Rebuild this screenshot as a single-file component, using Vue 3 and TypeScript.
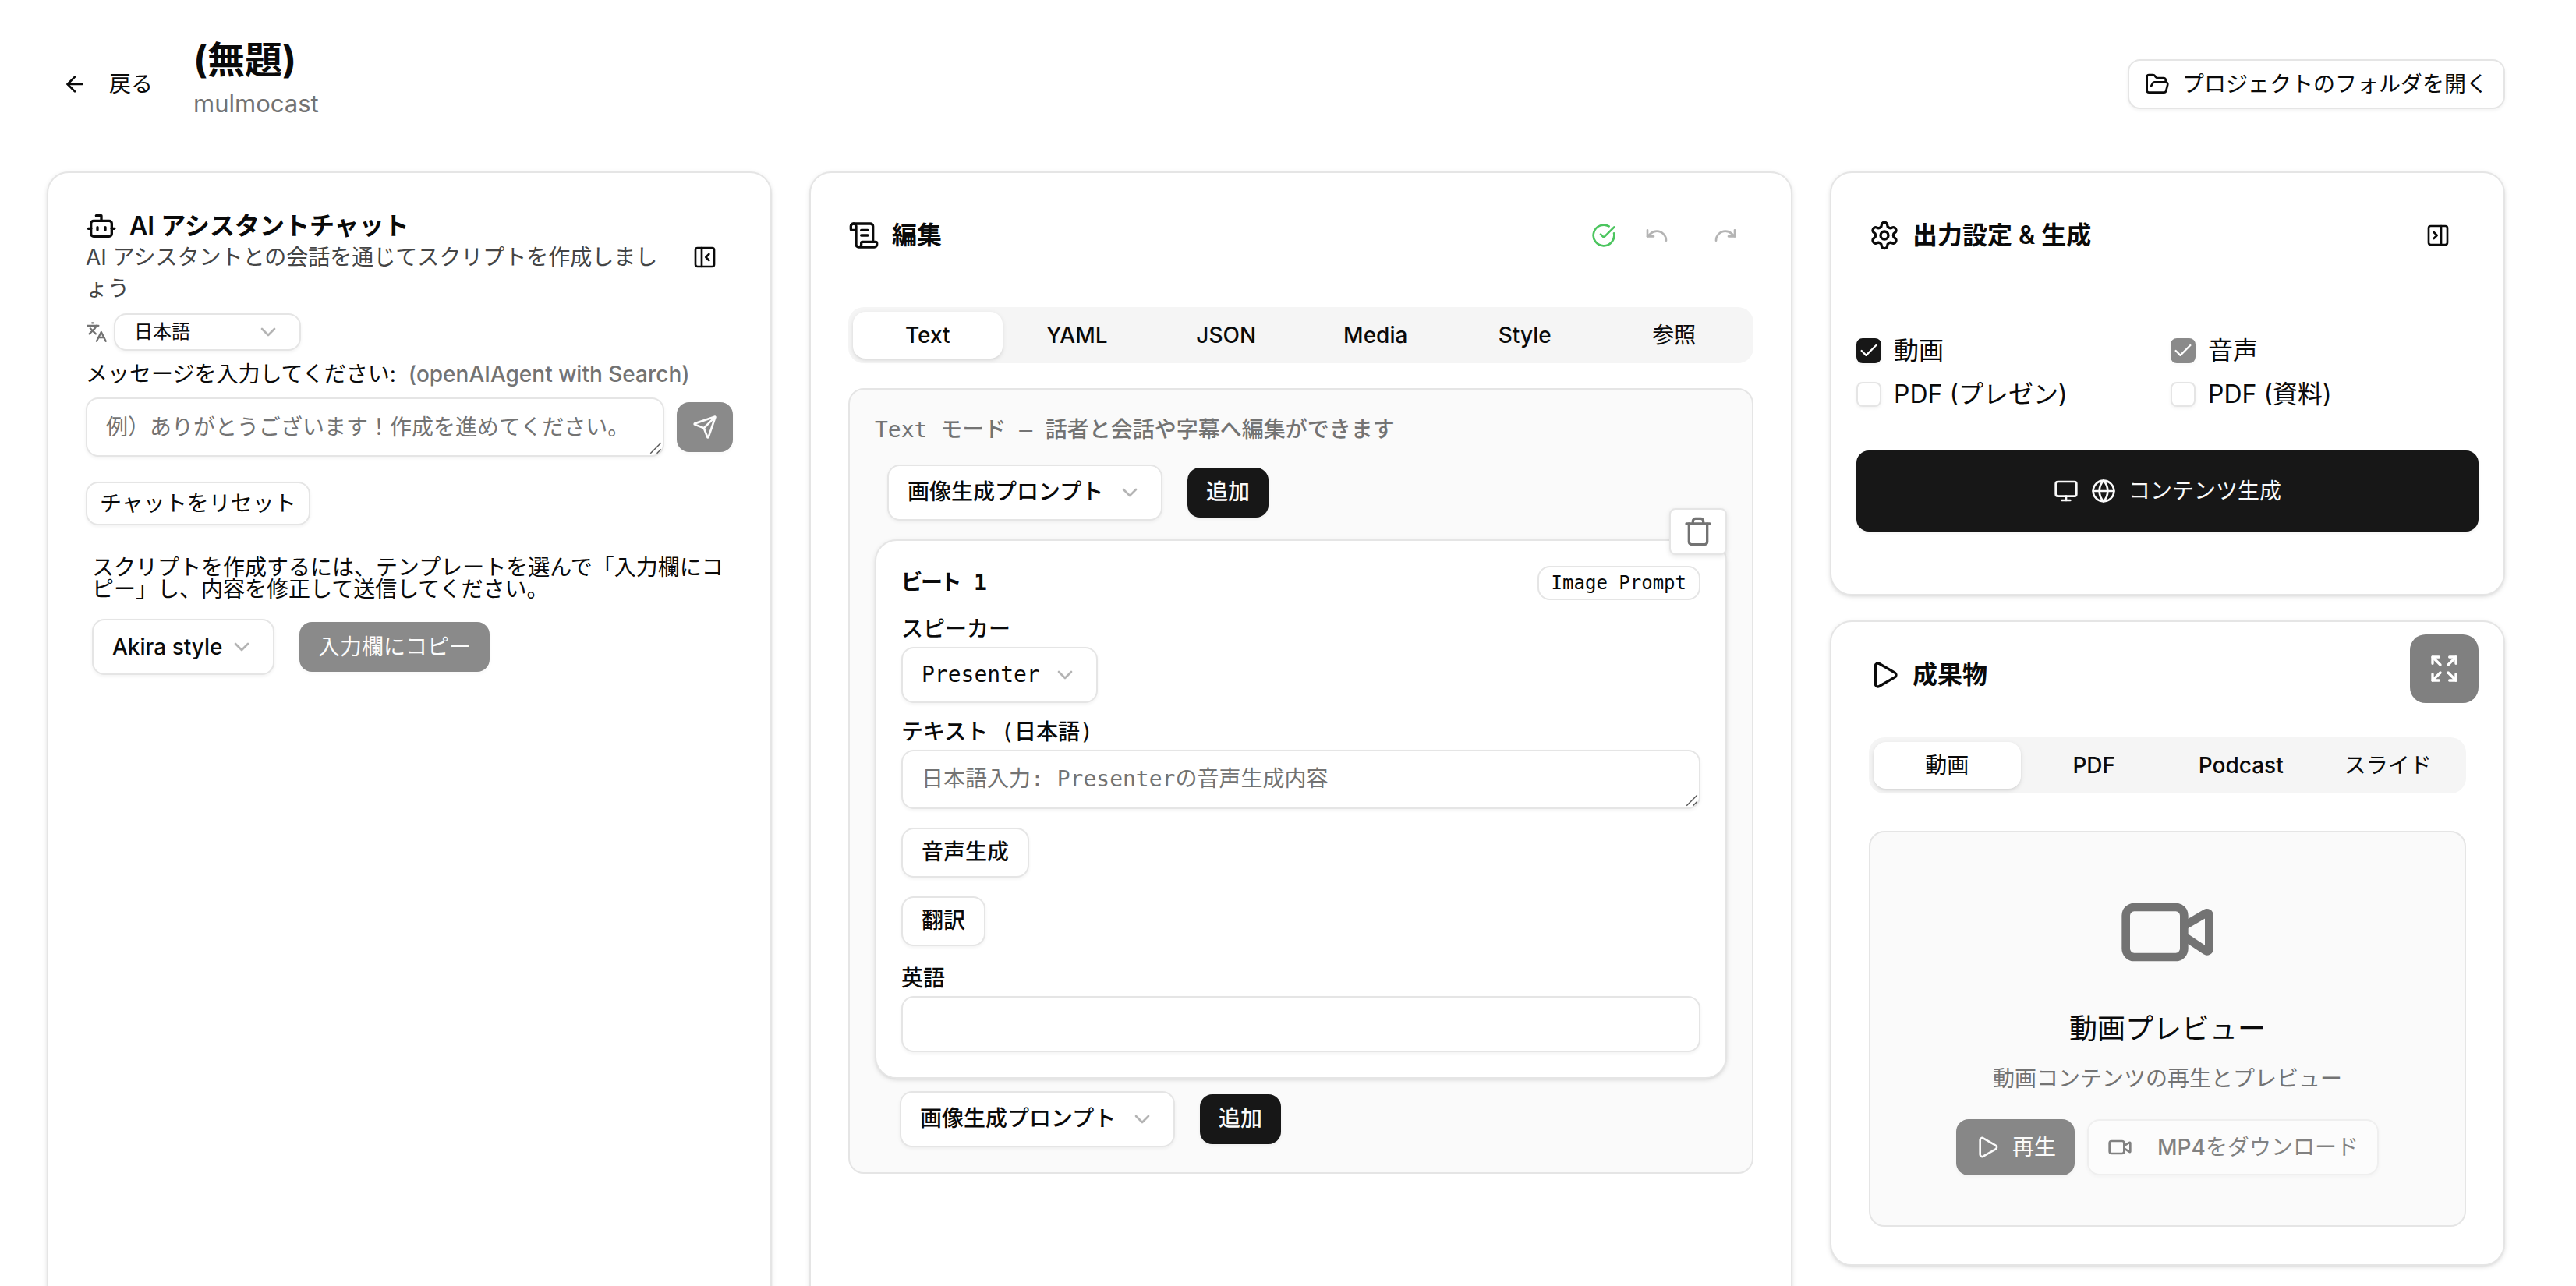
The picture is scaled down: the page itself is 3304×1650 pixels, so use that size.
<script setup lang="ts">
import { ref } from 'vue'

const icons = {
  arrowLeft: '<path d="m12 19-7-7 7-7"/><path d="M19 12H5"/>',
  folderOpen:
    '<path d="m6 14 1.5-2.9A2 2 0 0 1 9.24 10H20a2 2 0 0 1 1.94 2.5l-1.54 6a2 2 0 0 1-1.95 1.5H4a2 2 0 0 1-2-2V5a2 2 0 0 1 2-2h3.9a2 2 0 0 1 1.69.9l.81 1.2a2 2 0 0 0 1.67.9H18a2 2 0 0 1 2 2v2"/>',
  bot: '<path d="M12 8V4H8"/><rect width="16" height="12" x="4" y="8" rx="2"/><path d="M2 14h2"/><path d="M20 14h2"/><path d="M15 13v2"/><path d="M9 13v2"/>',
  panelLeftClose:
    '<rect width="18" height="18" x="3" y="3" rx="2"/><path d="M9 3v18"/><path d="m16 15-3-3 3-3"/>',
  panelRightClose:
    '<rect width="18" height="18" x="3" y="3" rx="2"/><path d="M15 3v18"/><path d="m8 9 3 3-3 3"/>',
  languages:
    '<path d="m5 8 6 6"/><path d="m4 14 6-6 2-3"/><path d="M2 5h12"/><path d="M7 2h1"/><path d="m22 22-5-10-5 10"/><path d="M14 18h6"/>',
  chevronDown: '<path d="m6 9 6 6 6-6"/>',
  send: '<path d="M14.536 21.686a.5.5 0 0 0 .937-.024l6.5-19a.496.496 0 0 0-.635-.635l-19 6.5a.5.5 0 0 0-.024.937l7.93 3.18a2 2 0 0 1 1.112 1.11z"/><path d="m21.854 2.147-10.94 10.939"/>',
  scroll:
    '<path d="M15 12h-5"/><path d="M15 8h-5"/><path d="M19 17V5a2 2 0 0 0-2-2H4"/><path d="M8 21h12a2 2 0 0 0 2-2v-1a1 1 0 0 0-1-1H11a1 1 0 0 0-1 1v1a2 2 0 1 1-4 0V5a2 2 0 1 0-4 0v2a1 1 0 0 0 1 1h3"/>',
  circleCheck: '<path d="M21.801 10A10 10 0 1 1 17 3.335"/><path d="m9 11 3 3L22 4"/>',
  undo: '<path d="M3 7v6h6"/><path d="M21 17a9 9 0 0 0-9-9 9 9 0 0 0-6 2.3L3 13"/>',
  redo: '<path d="M21 7v6h-6"/><path d="M3 17a9 9 0 0 1 9-9 9 9 0 0 1 6 2.3l3 2.7"/>',
  trash:
    '<path d="M19 6v14a2 2 0 0 1-2 2H7a2 2 0 0 1-2-2V6"/><path d="M3 6h18"/><path d="M8 6V4a2 2 0 0 1 2-2h4a2 2 0 0 1 2 2v2"/>',
  settings:
    '<path d="M12.22 2h-.44a2 2 0 0 0-2 2v.18a2 2 0 0 1-1 1.73l-.43.25a2 2 0 0 1-2 0l-.15-.08a2 2 0 0 0-2.73.73l-.22.38a2 2 0 0 0 .73 2.73l.15.1a2 2 0 0 1 1 1.72v.51a2 2 0 0 1-1 1.74l-.15.09a2 2 0 0 0-.73 2.73l.22.38a2 2 0 0 0 2.73.73l.15-.08a2 2 0 0 1 2 0l.43.25a2 2 0 0 1 1 1.73V20a2 2 0 0 0 2 2h.44a2 2 0 0 0 2-2v-.18a2 2 0 0 1 1-1.73l.43-.25a2 2 0 0 1 2 0l.15.08a2 2 0 0 0 2.73-.73l.22-.39a2 2 0 0 0-.73-2.73l-.15-.08a2 2 0 0 1-1-1.74v-.5a2 2 0 0 1 1-1.74l.15-.09a2 2 0 0 0 .73-2.73l-.22-.38a2 2 0 0 0-2.73-.73l-.15.08a2 2 0 0 1-2 0l-.43-.25a2 2 0 0 1-1-1.73V4a2 2 0 0 0-2-2z"/><circle cx="12" cy="12" r="3"/>',
  check: '<path d="M20 6 9 17l-5-5"/>',
  monitor:
    '<rect width="20" height="14" x="2" y="3" rx="2"/><path d="M8 21h8"/><path d="M12 17v4"/>',
  globe:
    '<circle cx="12" cy="12" r="10"/><path d="M12 2a14.5 14.5 0 0 0 0 20 14.5 14.5 0 0 0 0-20"/><path d="M2 12h20"/>',
  play: '<path d="M5 5a2 2 0 0 1 3.008-1.728l11.997 6.998a2 2 0 0 1 .003 3.458l-12 7A2 2 0 0 1 5 19z"/>',
  expand:
    '<path d="m15 15 6 6"/><path d="m15 9 6-6"/><path d="M21 16v5h-5"/><path d="M21 8V3h-5"/><path d="M3 16v5h5"/><path d="m3 21 6-6"/><path d="M3 8V3h5"/><path d="M9 9 3 3"/>',
  video:
    '<path d="m16 13 5.223 3.482a.5.5 0 0 0 .777-.416V7.87a.5.5 0 0 0-.752-.432L16 10.5"/><rect x="2" y="6" width="14" height="12" rx="2"/>',
  grip: '<path d="M3 21 21 3"/><path d="m14 21 7-7"/>',
}

interface OutputOption {
  id: string
  label: string
  checked: boolean
  disabled: boolean
}

const editTabs = ['Text', 'YAML', 'JSON', 'Media', 'Style', '参照']
const activeEditTab = ref('Text')

const resultTabs = ['動画', 'PDF', 'Podcast', 'スライド']
const activeResultTab = ref('動画')

// Latin tab names are set in medium weight, Japanese ones in regular.
const isLatin = (name: string) => /^[A-Za-z]+$/.test(name)

const outputs = ref<OutputOption[]>([
  { id: 'movie', label: '動画', checked: true, disabled: false },
  { id: 'audio', label: '音声', checked: true, disabled: true },
  { id: 'pdf-slide', label: 'PDF (プレゼン)', checked: false, disabled: false },
  { id: 'pdf-handout', label: 'PDF (資料)', checked: false, disabled: false },
])

const message = ref('')
const beatText = ref('')
const englishText = ref('')
</script>

<template>
  <div class="page">
    <header class="topbar">
      <button class="btn ghost back" type="button">
        <svg class="icon" viewBox="0 0 24 24" v-html="icons.arrowLeft" />
        <span>戻る</span>
      </button>
      <div class="heading">
        <h1>(無題)</h1>
        <p>mulmocast</p>
      </div>
      <button class="btn outline open-folder" type="button">
        <svg class="icon" viewBox="0 0 24 24" v-html="icons.folderOpen" />
        <span>プロジェクトのフォルダを開く</span>
      </button>
    </header>

    <main class="columns">
      <section class="card chat">
        <div class="chat-head">
          <div>
            <h2 class="title">
              <svg class="icon lg" viewBox="0 0 24 24" v-html="icons.bot" />
              AI アシスタントチャット
            </h2>
            <p class="lead">AI アシスタントとの会話を通じてスクリプトを作成しましょう</p>
          </div>
          <button class="icon-btn" type="button" aria-label="パネルを閉じる">
            <svg class="icon" viewBox="0 0 24 24" v-html="icons.panelLeftClose" />
          </button>
        </div>

        <div class="lang-row">
          <svg class="icon sm muted" viewBox="0 0 24 24" v-html="icons.languages" />
          <div class="select small">
            <select aria-label="言語"><option>日本語</option></select>
            <svg class="icon" viewBox="0 0 24 24" v-html="icons.chevronDown" />
          </div>
        </div>

        <label class="chat-label" for="message">
          <span>メッセージを入力してください:</span>
          <span class="agent">(openAIAgent with Search)</span>
        </label>
        <div class="compose">
          <div class="area">
            <textarea
              id="message"
              v-model="message"
              rows="1"
              placeholder="例）ありがとうございます！作成を進めてください。"
            />
            <svg class="grip" viewBox="0 0 24 24" v-html="icons.grip" />
          </div>
          <button class="btn primary dim send" type="button" aria-label="送信">
            <svg class="icon" viewBox="0 0 24 24" v-html="icons.send" />
          </button>
        </div>
        <button class="btn outline reset" type="button">チャットをリセット</button>

        <div class="template">
          <p>
            スクリプトを作成するには、テンプレートを選んで「入力欄にコピー」し、内容を修正して送信してください。
          </p>
          <div class="pick-row">
            <div class="select style-select">
              <select aria-label="テンプレート"><option>Akira style</option></select>
              <svg class="icon" viewBox="0 0 24 24" v-html="icons.chevronDown" />
            </div>
            <button class="btn primary dim" type="button">入力欄にコピー</button>
          </div>
        </div>
      </section>

      <section class="card">
        <div class="card-head">
          <h2 class="title">
            <svg class="icon lg" viewBox="0 0 24 24" v-html="icons.scroll" />
            編集
          </h2>
          <div class="history">
            <svg class="icon ok" viewBox="0 0 24 24" v-html="icons.circleCheck" />
            <button class="icon-btn faint" type="button" aria-label="元に戻す">
              <svg class="icon" viewBox="0 0 24 24" v-html="icons.undo" />
            </button>
            <button class="icon-btn faint" type="button" aria-label="やり直す">
              <svg class="icon" viewBox="0 0 24 24" v-html="icons.redo" />
            </button>
          </div>
        </div>

        <div class="tabs" role="tablist">
          <button
            v-for="tab in editTabs"
            :key="tab"
            type="button"
            role="tab"
            :class="{ active: tab === activeEditTab, latin: isLatin(tab) }"
            :aria-selected="tab === activeEditTab"
            @click="activeEditTab = tab"
          >
            {{ tab }}
          </button>
        </div>

        <div class="editor mono">
          <p class="mode">Text モード – 話者と会話や字幕へ編集ができます</p>
          <div class="pick-row add">
            <div class="select">
              <select aria-label="ビートの種類"><option>画像生成プロンプト</option></select>
              <svg class="icon" viewBox="0 0 24 24" v-html="icons.chevronDown" />
            </div>
            <button class="btn primary" type="button">追加</button>
          </div>

          <article class="beat">
            <button class="trash" type="button" aria-label="削除">
              <svg class="icon lg" viewBox="0 0 24 24" v-html="icons.trash" />
            </button>
            <div class="beat-head">
              <h3>ビート 1</h3>
              <span class="badge">Image Prompt</span>
            </div>

            <label class="field-label" for="speaker">スピーカー</label>
            <div class="select">
              <select id="speaker"><option>Presenter</option></select>
              <svg class="icon" viewBox="0 0 24 24" v-html="icons.chevronDown" />
            </div>

            <label class="field-label" for="beat-text">テキスト (日本語)</label>
            <div class="area">
              <textarea
                id="beat-text"
                v-model="beatText"
                rows="1"
                placeholder="日本語入力: Presenterの音声生成内容"
              />
              <svg class="grip" viewBox="0 0 24 24" v-html="icons.grip" />
            </div>

            <div class="beat-actions">
              <button class="btn outline" type="button">音声生成</button>
              <button class="btn outline" type="button">翻訳</button>
            </div>

            <label class="field-label" for="english">英語</label>
            <input id="english" v-model="englishText" class="text-input" type="text" />
          </article>

          <div class="pick-row add last">
            <div class="select">
              <select aria-label="次のビートの種類"><option>画像生成プロンプト</option></select>
              <svg class="icon" viewBox="0 0 24 24" v-html="icons.chevronDown" />
            </div>
            <button class="btn primary" type="button">追加</button>
          </div>
        </div>
      </section>

      <div class="side">
        <section class="card output">
          <div class="card-head">
            <h2 class="title">
              <svg class="icon lg" viewBox="0 0 24 24" v-html="icons.settings" />
              出力設定 &amp; 生成
            </h2>
            <button class="icon-btn" type="button" aria-label="パネルを閉じる">
              <svg class="icon" viewBox="0 0 24 24" v-html="icons.panelRightClose" />
            </button>
          </div>
          <div class="output-body">
            <div class="options">
              <div v-for="item in outputs" :key="item.id" class="option">
                <span class="check" :class="{ dim: item.disabled }">
                  <input
                    :id="item.id"
                    v-model="item.checked"
                    type="checkbox"
                    :disabled="item.disabled"
                  />
                  <svg
                    v-if="item.checked"
                    class="icon sm"
                    viewBox="0 0 24 24"
                    v-html="icons.check"
                  />
                </span>
                <label :for="item.id">{{ item.label }}</label>
              </div>
            </div>
            <button class="btn primary generate" type="button">
              <svg class="icon" viewBox="0 0 24 24" v-html="icons.monitor" />
              <svg class="icon" viewBox="0 0 24 24" v-html="icons.globe" />
              <span>コンテンツ生成</span>
            </button>
          </div>
        </section>

        <section class="card result">
          <button class="expand" type="button" aria-label="拡大">
            <svg class="icon lg" viewBox="0 0 24 24" v-html="icons.expand" />
          </button>
          <h2 class="title">
            <svg class="icon lg" viewBox="0 0 24 24" v-html="icons.play" />
            成果物
          </h2>
          <div class="tabs" role="tablist">
            <button
              v-for="tab in resultTabs"
              :key="tab"
              type="button"
              role="tab"
              :class="{ active: tab === activeResultTab, latin: isLatin(tab) }"
              :aria-selected="tab === activeResultTab"
              @click="activeResultTab = tab"
            >
              {{ tab }}
            </button>
          </div>
          <div class="preview">
            <svg class="icon huge muted" viewBox="0 0 24 24" v-html="icons.video" />
            <h3>動画プレビュー</h3>
            <p>動画コンテンツの再生とプレビュー</p>
            <div class="preview-actions">
              <button class="btn primary dim tall" type="button">
                <svg class="icon" viewBox="0 0 24 24" v-html="icons.play" />
                <span>再生</span>
              </button>
              <button class="btn outline dim tall download" type="button">
                <svg class="icon" viewBox="0 0 24 24" v-html="icons.video" />
                <span><b>MP4</b>をダウンロード</span>
              </button>
            </div>
          </div>
        </section>
      </div>
    </main>
  </div>
</template>

<style>
body {
  background: #fff;
}
</style>

<style scoped>
.page {
  --sans: Inter, 'Noto Sans CJK JP', sans-serif;
  --mono: 'DejaVu Sans Mono', 'Noto Sans CJK JP', monospace;
  --line: #e5e5e5;
  --ink: #0a0a0a;
  --gray: #737373;
  height: 100vh;
  overflow: hidden;
  box-sizing: border-box;
  padding: 44px 91px 0 60px;
  background: #fff;
  color: var(--ink);
  font-family: var(--sans);
  font-size: 28px;
  line-height: 40px;
}

.page *,
.page *::before {
  box-sizing: border-box;
}

h1,
h2,
h3,
p {
  margin: 0;
}

button,
select,
textarea,
input {
  margin: 0;
  font: inherit;
  color: inherit;
}

.icon {
  flex: none;
  width: 32px;
  height: 32px;
  fill: none;
  stroke: currentColor;
  stroke-width: 2;
  stroke-linecap: round;
  stroke-linejoin: round;
}

.icon.sm {
  width: 28px;
  height: 28px;
}

.icon.lg {
  width: 40px;
  height: 40px;
}

.icon.huge {
  width: 128px;
  height: 128px;
}

.icon.ok {
  color: #4cc55f;
}

.muted {
  color: var(--gray);
}

/* Buttons */
.btn {
  display: inline-flex;
  align-items: center;
  justify-content: center;
  gap: 16px;
  height: 64px;
  padding: 0 24px;
  border: 0;
  border-radius: 16px;
  white-space: nowrap;
  cursor: pointer;
}

.btn.outline {
  border: 2px solid var(--line);
  background: #fff;
  box-shadow: 0 2px 4px rgba(0, 0, 0, 0.05);
}

.btn.primary {
  background: #171717;
  color: #fafafa;
  box-shadow: 0 2px 4px rgba(0, 0, 0, 0.05);
}

.btn.ghost {
  background: none;
}

.btn.tall {
  height: 72px;
}

.dim {
  opacity: 0.5;
}

.icon-btn {
  display: flex;
  flex: none;
  align-items: center;
  justify-content: center;
  width: 72px;
  height: 64px;
  padding: 0;
  border: 0;
  background: none;
  cursor: pointer;
}

.icon-btn.faint {
  opacity: 0.3;
}

/* Header */
.topbar {
  display: flex;
  align-items: center;
  height: 128px;
  margin-bottom: 48px;
}

.btn.back {
  gap: 28px;
  padding: 0 20px;
}

.heading {
  margin-left: 32px;
  padding-bottom: 14px;
}

.heading h1 {
  font-size: 48px;
  font-weight: 700;
  line-height: 64px;
}

.heading p {
  font-size: 31px;
  line-height: 48px;
  color: var(--gray);
}

.btn.open-folder {
  margin-left: auto;
  padding: 0 20px;
}

/* Layout */
.columns {
  display: grid;
  grid-template-columns: 930fr 1261fr 866fr;
  gap: 48px;
  min-height: 100vh;
}

.side {
  display: flex;
  flex-direction: column;
  gap: 32px;
}

.card {
  position: relative;
  min-width: 0;
  padding: 48px;
  border: 2px solid var(--line);
  border-radius: 28px;
  background: #fff;
  box-shadow:
    0 2px 6px rgba(0, 0, 0, 0.1),
    0 2px 4px -2px rgba(0, 0, 0, 0.1);
}

.card-head {
  display: flex;
  align-items: center;
  justify-content: space-between;
  height: 64px;
}

.title {
  display: flex;
  align-items: center;
  gap: 16px;
  font-size: 32px;
  font-weight: 600;
  line-height: 40px;
}

.history {
  display: flex;
  align-items: center;
  gap: 16px;
}

/* Form controls */
.select {
  display: inline-grid;
  align-items: center;
}

.select select,
.select .icon {
  grid-area: 1 / 1;
}

.select select {
  height: 72px;
  padding: 0 72px 0 24px;
  border: 2px solid var(--line);
  border-radius: 16px;
  background: #fff;
  box-shadow: 0 2px 4px rgba(0, 0, 0, 0.05);
  appearance: none;
}

.select .icon {
  justify-self: end;
  margin-right: 26px;
  opacity: 0.3;
  pointer-events: none;
}

.select.small select {
  width: 240px;
  height: 48px;
  font-size: 24px;
}

.select.style-select select {
  width: 234px;
  padding-right: 60px;
  font-weight: 500;
}

.area {
  position: relative;
  flex: 1;
  min-width: 0;
}

.area textarea,
.text-input {
  display: block;
  width: 100%;
  border: 2px solid var(--line);
  border-radius: 16px;
  background: #fff;
  box-shadow: 0 2px 4px rgba(0, 0, 0, 0.05);
}

.area textarea {
  height: 76px;
  padding: 16px 24px;
  overflow: hidden;
  resize: none;
}

.area textarea::placeholder {
  color: var(--gray);
  opacity: 1;
}

.text-input {
  height: 72px;
  padding: 0 24px;
}

.grip {
  position: absolute;
  right: 2px;
  bottom: 2px;
  width: 18px;
  height: 18px;
  fill: none;
  stroke: #555;
  stroke-width: 2;
}

/* Tabs */
.tabs {
  display: flex;
  height: 72px;
  margin-top: 60px;
  padding: 6px;
  border-radius: 20px;
  background: #f5f5f5;
}

.tabs button {
  flex: 1;
  padding: 0;
  border: 0;
  border-radius: 16px;
  background: none;
  cursor: pointer;
}

.tabs .latin {
  font-weight: 500;
}

.tabs .active {
  background: #fff;
  box-shadow:
    0 2px 6px rgba(0, 0, 0, 0.1),
    0 2px 4px -2px rgba(0, 0, 0, 0.1);
}

/* Chat */
.chat-head {
  display: flex;
  align-items: center;
  gap: 16px;
}

.lead {
  color: #454545;
}

.lang-row {
  display: flex;
  align-items: center;
  gap: 8px;
  margin-top: 12px;
}

.chat-label {
  display: flex;
  gap: 16px;
  margin: 16px 0;
  line-height: 28px;
}

.agent {
  font-weight: 500;
  color: var(--gray);
}

.compose {
  display: flex;
  align-items: center;
  gap: 16px;
}

.btn.send {
  width: 72px;
  padding: 0;
}

.btn.reset {
  height: 56px;
  margin-top: 32px;
  padding: 0 16px;
}

.template {
  margin-top: 40px;
  padding: 0 8px;
}

.template p {
  margin-bottom: 24px;
  line-height: 28px;
}

.pick-row {
  display: flex;
  align-items: center;
  gap: 32px;
}

/* Editor */
.editor {
  margin-top: 32px;
  padding: 32px;
  border: 2px solid var(--line);
  border-radius: 20px;
  background: #fafafa;
}

.mono {
  font-family: var(--mono);
  font-weight: 500;
}

.mode {
  color: var(--gray);
}

.pick-row.add {
  margin: 24px 16px;
}

.pick-row.last {
  margin: 16px 32px 0;
}

.beat {
  position: relative;
  padding: 32px;
  border: 2px solid var(--line);
  border-radius: 28px;
  background: #fff;
  box-shadow:
    0 2px 6px rgba(0, 0, 0, 0.1),
    0 2px 4px -2px rgba(0, 0, 0, 0.1);
}

.trash {
  position: absolute;
  top: -42px;
  right: -2px;
  display: flex;
  align-items: center;
  justify-content: center;
  width: 74px;
  height: 60px;
  padding: 0;
  border: 2px solid var(--line);
  border-radius: 8px;
  background: #fff;
  color: var(--gray);
  box-shadow: 0 2px 6px rgba(0, 0, 0, 0.1);
  cursor: pointer;
}

.beat-head {
  display: flex;
  align-items: center;
  justify-content: space-between;
}

.beat-head h3 {
  font-size: 28px;
  font-weight: 700;
  font-feature-settings: 'palt';
}

.badge {
  height: 44px;
  padding: 0 16px;
  border: 2px solid var(--line);
  border-radius: 16px;
  font-size: 24px;
}

.field-label {
  display: block;
  margin: 24px 0 8px;
  line-height: 28px;
}

.beat .area textarea {
  font-weight: 400;
}

.beat-actions {
  display: flex;
  flex-direction: column;
  align-items: flex-start;
  gap: 24px;
  margin: 24px 0 28px;
}

/* Output settings */
.card.output {
  padding: 48px 0 80px;
}

.output .card-head {
  padding: 0 48px;
}

.output-body {
  padding: 100px 32px 0;
}

.options {
  display: grid;
  grid-template-columns: 1fr 1fr;
  gap: 24px 8px;
  font-size: 32px;
  line-height: 32px;
}

.option {
  display: flex;
  align-items: center;
  gap: 16px;
}

.check {
  display: grid;
  place-items: center;
  width: 32px;
  height: 32px;
  color: #fff;
}

.check > * {
  grid-area: 1 / 1;
}

.check .icon {
  pointer-events: none;
}

.check input {
  width: 32px;
  height: 32px;
  border: 2px solid var(--line);
  border-radius: 8px;
  background: #fff;
  box-shadow: 0 2px 4px rgba(0, 0, 0, 0.05);
  appearance: none;
}

.check input:checked {
  border-color: #171717;
  background: #171717;
}

.btn.generate {
  width: 100%;
  height: 104px;
  margin-top: 56px;
}

/* Result */
.expand {
  position: absolute;
  top: 16px;
  right: 32px;
  display: flex;
  align-items: center;
  justify-content: center;
  width: 88px;
  height: 88px;
  padding: 0;
  border: 0;
  border-radius: 20px;
  background: #808080;
  color: #fff;
  cursor: pointer;
}

.preview {
  display: flex;
  flex-direction: column;
  align-items: center;
  margin-top: 48px;
  padding: 64px 32px;
  border: 2px solid var(--line);
  border-radius: 20px;
  background: #fafafa;
}

.preview h3 {
  margin-top: 32px;
  font-size: 36px;
  font-weight: 400;
  line-height: 56px;
}

.preview p {
  margin-top: 16px;
  color: var(--gray);
}

.preview-actions {
  display: flex;
  gap: 16px;
  margin-top: 32px;
}

.btn.download {
  gap: 32px;
}

.download b {
  font-weight: 500;
}
</style>
